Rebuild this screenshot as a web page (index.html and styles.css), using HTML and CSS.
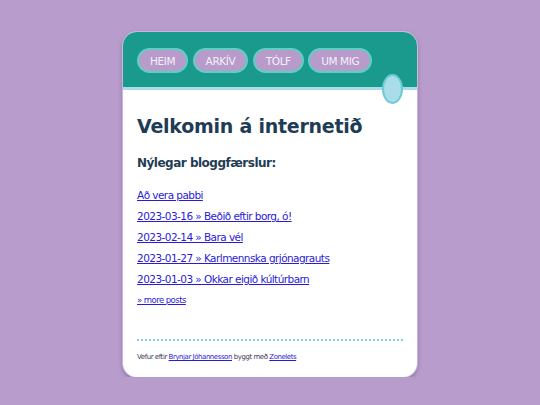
FILE: index.html
```html
<!DOCTYPE html>
<html lang="is">
<head>
<meta charset="utf-8">
<title>Velkomin</title>
<link rel="stylesheet" href="styles.css">
</head>
<body>
<div class="card">
  <header class="top">
    <nav class="nav">
      <a class="btn" href="#">HEIM</a>
      <a class="btn" href="#">ARKÍV</a>
      <a class="btn" href="#">TÓLF</a>
      <a class="btn" href="#">UM MIG</a>
    </nav>
    <span class="knob"></span>
  </header>
  <main class="content">
    <h1>Velkomin á internetið</h1>
    <h2>Nýlegar bloggfærslur:</h2>
    <ul class="posts">
      <li><a href="#">Að vera pabbi</a></li>
      <li><a href="#">2023-03-16 » Beðið eftir borg, ó!</a></li>
      <li><a href="#">2023-02-14 » Bara vél</a></li>
      <li><a href="#">2023-01-27 » Karlmennska grjónagrauts</a></li>
      <li><a href="#">2023-01-03 » Okkar eigið kúltúrbarn</a></li>
    </ul>
    <a class="more" href="#">» more posts</a>
  </main>
  <footer class="foot">
    Vefur eftir <a href="#">Brynjar Jóhannesson</a> byggt með <a href="#">Zonelets</a>
  </footer>
</div>
</body>
</html>
```
FILE: styles.css
```css
html, body {
  margin: 0;
  padding: 0;
}
body {
  background: #b89ccb;
  font-family: "DejaVu Sans", Verdana, sans-serif;
  padding-top: 32px;
}
.card {
  width: 294px;
  height: 345px;
  margin: 0 auto;
  background: #ffffff;
  border-radius: 14px;
  box-shadow: 0 0 0 1px #cbb7da, 0 2px 4px rgba(70, 50, 100, 0.5);
  display: flex;
  flex-direction: column;
}
.top {
  position: relative;
  background: #1a9a8c;
  border-radius: 14px 14px 0 0;
  border-bottom: 3px solid #a9dde9;
  box-sizing: border-box;
  height: 58px;
  padding: 16px 0 0 14px;
}
.nav {
  display: flex;
  gap: 4.5px;
}
.btn {
  display: flex;
  align-items: center;
  height: 25px;
  box-sizing: border-box;
  padding: 0 11px;
  border: 2px solid #5fcfc5;
  border-radius: 13px;
  background: #b79bcb;
  color: #f6f0fa;
  font-size: 10.5px;
  letter-spacing: -0.4px;
  text-decoration: none;
}
.knob {
  position: absolute;
  right: 14px;
  top: 42px;
  width: 21px;
  height: 30px;
  box-sizing: border-box;
  border: 2px solid #6ccad4;
  border-radius: 50%;
  background: #a9dde9;
}
.content {
  padding: 24px 14px 0 14px;
  flex: 1;
}
h1 {
  margin: 0;
  font-size: 19px;
  letter-spacing: -0.25px;
  font-weight: bold;
  color: #1f3c55;
  line-height: 24px;
}
h2 {
  margin: 16px 0 0 0;
  font-size: 12px;
  letter-spacing: -0.5px;
  font-weight: bold;
  color: #1f3c55;
  line-height: 18px;
}
.posts {
  list-style: none;
  margin: 13px 0 0 0;
  padding: 0;
}
.posts li {
  font-size: 10.5px;
  letter-spacing: -0.55px;
  line-height: 21px;
}
a {
  color: #2a1ad9;
}
.more {
  display: block;
  font-size: 8.5px;
  letter-spacing: -0.55px;
  margin-top: 3px;
  line-height: 14px;
}
.foot {
  margin: 0 14px;
  border-top: 2px dotted #7fd0d8;
  padding: 11px 0 15px 0;
  font-size: 7px;
  letter-spacing: -0.45px;
  line-height: 10px;
  color: #3b3b55;
}
```
